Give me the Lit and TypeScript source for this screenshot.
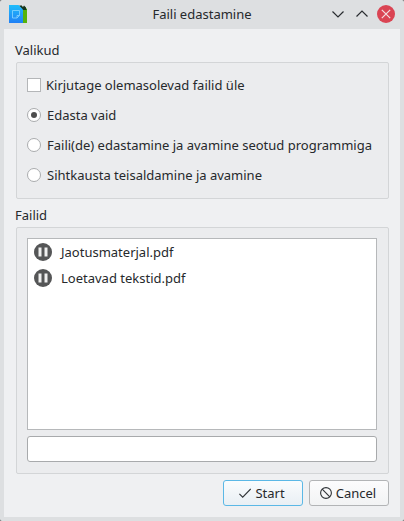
import { LitElement, html, css } from "lit";
import { customElement, property } from "lit/decorators.js";

const font = css`"Noto Sans", "Open Sans", sans-serif`;

@customElement("choice-row")
class ChoiceRow extends LitElement {
  @property() kind = "radio";
  @property() label = "";
  @property({ type: Boolean }) checked = false;

  static styles = css`
    :host { display: flex; align-items: center; height: 30px; }
    .mark { box-sizing: border-box; width: 14px; height: 14px; background: #fff; border: 1px solid #b4b6b8; flex: none; display: flex; align-items: center; justify-content: center; }
    .radio.mark { border-radius: 50%; border-color: #aaacae; }
    .dot { width: 6px; height: 6px; border-radius: 50%; background: #4d4d4d; }
    .label { white-space: nowrap; margin-left: 6px; line-height: 18px; }
    .label.check { margin-left: 5px; }
  `;

  render() {
    return html`
      <span class="mark ${this.kind}">${this.checked ? html`<span class="dot"></span>` : ""}</span>
      <span class="label ${this.kind}">${this.label}</span>`;
  }
}

@customElement("app-root")
class AppRoot extends LitElement {
  private files = ["Jaotusmaterjal.pdf", "Loetavad tekstid.pdf"];

  static styles = css`
    * { box-sizing: border-box; }
    :host { display: block; width: 404px; height: 521px; background: #5f6061; font: 13px/18px ${font}; color: #26292c; }
    svg { display: block; flex: none; }
    .window { height: 521px; display: flex; flex-direction: column; background: #dddfe1; padding: 0 4px 4px; border-radius: 2px; }
    .titlebar { height: 29px; flex: none; display: grid; grid-template-columns: 70px 1fr 70px; align-items: center; }
    .title { text-align: center; white-space: nowrap; margin-top: -1px; }
    .logo { margin-left: 5px; margin-top: -1px; }
    .controls { display: flex; align-items: center; gap: 6px; margin-left: -1px; margin-top: -1px; }
    .content { flex: 1; background: #eff0f2; padding: 12px 11px 11px 12px; display: flex; flex-direction: column; }
    .heading { height: 18px; margin-left: -1px; }
    .group { background: #ebecee; border: 1px solid #d3d5d7; border-radius: 2px; }
    .options { height: 137px; margin: 3px 0 7px; padding: 7px 10px; }
    .options choice-row { width: 345px; }
    .filegroup { height: 247px; margin-top: 3px; padding: 10px 11px 11px 10px; display: flex; flex-direction: column; gap: 6px; }
    .list { height: 192px; background: #fff; border: 1px solid #b6b8ba; padding: 0 6px; }
    .file { height: 26px; display: flex; align-items: center; gap: 9px; white-space: nowrap; }
    .bar { height: 26px; background: #fff; border: 1px solid #a8aaac; border-radius: 3px; }
    .actions { display: flex; justify-content: flex-end; gap: 6px; margin-top: 6px; }
    .button { width: 80px; height: 26px; border: 1px solid #b2b4b6; border-radius: 3px; background: linear-gradient(#fcfcfd, #f2f3f4); font: inherit; color: inherit; padding: 0 2px 0 0; display: flex; align-items: center; justify-content: center; gap: 4px; }
    .primary { border-color: #5bb8e6; background: linear-gradient(#fafcfd, #e9eff4); }
  `;

  private logo() {
    return html`<svg class="logo" width="18" height="18" viewBox="0 0 18 18">
      <defs><linearGradient id="blue" x1="0" y1="0" x2="0" y2="1"><stop offset="0" stop-color="#20bdfb"/><stop offset="1" stop-color="#2080f5"/></linearGradient></defs>
      <path d="M12 3.500h6V18h-6z" fill="#55b30a"/>
      <path d="M9.500 0l1.500 1 1-1 2 2 1-1.500 2 2V4l1 1h-5z" fill="#17351b"/>
      <path d="M0 0h9.500L14 4.500V18H0z" fill="url(#blue)"/>
      <path d="M3.500 5.500h7v5l-2.500 2.500H3.500zM10.500 10.500H8V13" fill="none" stroke="#8bd7ff" stroke-width=".8"/>
    </svg>`;
  }

  render() {
    return html`
      <div class="window">
        <div class="titlebar">
          ${this.logo()}
          <div class="title">Faili edastamine</div>
          <div class="controls">
            <svg width="18" height="18" viewBox="0 0 18 18" fill="none" stroke="#292c30" stroke-width="1.200"><path d="M3.500 6.500L9 12l5.500-5.500"/></svg>
            <svg width="18" height="18" viewBox="0 0 18 18" fill="none" stroke="#292c30" stroke-width="1.200"><path d="M3.500 11.500L9 6l5.500 5.500"/></svg>
            <svg width="18" height="18" viewBox="0 0 18 18" fill="none"><circle cx="9" cy="9" r="9" fill="#da4453"/><path d="M4.800 4.800l8.400 8.400M13.200 4.800l-8.400 8.400" stroke="#f3dfe2" stroke-width="1.200"/></svg>
          </div>
        </div>
        <div class="content">
          <div class="heading">Valikud</div>
          <div class="group options">
            <choice-row kind="check" label="Kirjutage olemasolevad failid üle"></choice-row>
            <choice-row label="Edasta vaid" checked></choice-row>
            <choice-row label="Faili(de) edastamine ja avamine seotud programmiga"></choice-row>
            <choice-row label="Sihtkausta teisaldamine ja avamine"></choice-row>
          </div>
          <div class="heading">Failid</div>
          <div class="group filegroup">
            <div class="list">
              ${this.files.map((name) => html`<div class="file">
                <svg width="18" height="18" viewBox="0 0 18 18"><circle cx="9" cy="9" r="9" fill="#555657"/><path d="M4.500 4.500h3v9h-3zM10.500 4.500h3v9h-3z" fill="#f0f0f0"/></svg>
                <span>${name}</span>
              </div>`)}
            </div>
            <div class="bar"></div>
          </div>
          <div class="actions">
            <button class="button primary">
              <svg width="12" height="12" viewBox="0 0 12 12" fill="none" stroke="#2f3337" stroke-width="1.100"><path d="M.4 6.800l3.300 3.300L11.700 1.900"/></svg>
              <span>Start</span>
            </button>
            <button class="button">
              <svg width="12" height="12" viewBox="0 0 12 12" fill="none" stroke="#2f3337" stroke-width="1.100"><circle cx="6" cy="6" r="5.400"/><path d="M2.200 2.200l7.600 7.600"/></svg>
              <span>Cancel</span>
            </button>
          </div>
        </div>
      </div>`;
  }
}
